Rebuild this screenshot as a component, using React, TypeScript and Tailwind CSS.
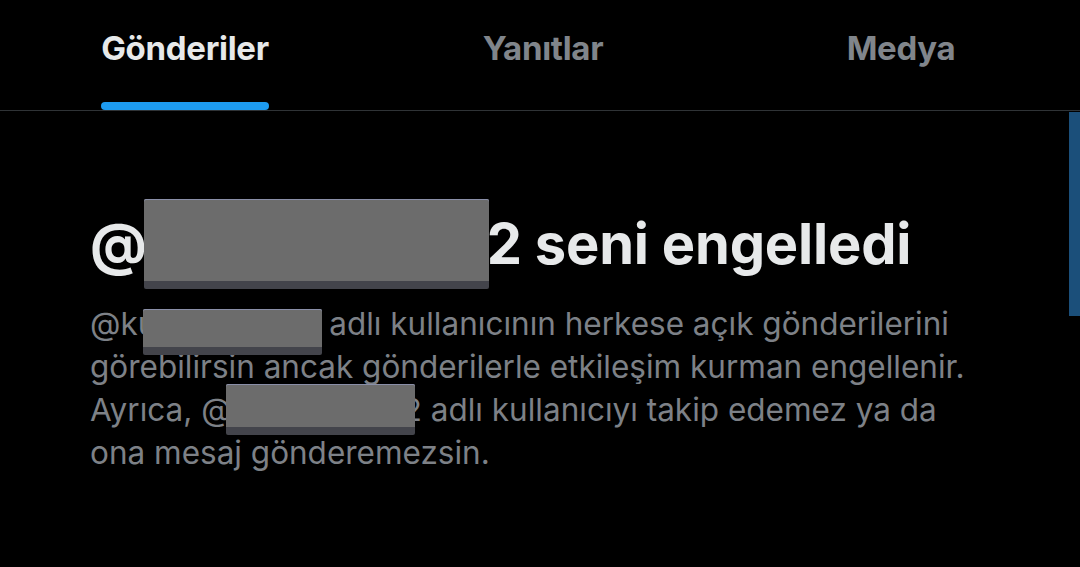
type RedactProps = { width: number; className: string };

// gray censor block sitting on the text baseline without growing the line
function Redact({ width, className }: RedactProps) {
  return (
    <span className="relative inline-block h-0 align-baseline" style={{ width }}>
      <span
        className={`absolute z-10 bg-[#6c6c6c] border-b-[8px] border-[#43444b] rounded-[2px] shadow-[0_1px_0_#8a8fa8_inset] ${className}`}
      ></span>
    </span>
  );
}

export default function App() {
  const tabs = [
    { label: "Gönderiler", active: true },
    { label: "Yanıtlar", active: false },
    { label: "Medya", active: false },
  ];

  return (
    <div className="w-[1080px] h-[567px] bg-black overflow-hidden relative font-['Inter','Noto_Sans',sans-serif]">
      {/* Tabs */}
      <div className="grid grid-cols-3 h-[111px] border-b border-[#2f3336] pl-[6px]">
        {tabs.map((t) => (
          <div key={t.label} className="flex flex-col items-center justify-end">
            <div className="flex flex-col items-stretch">
              <span
                className={`text-[33px] font-bold leading-none tracking-[-0.3px] ${
                  t.active ? "text-[#e7e9ea]" : "text-[#80858b]"
                }`}
              >
                {t.label}
              </span>
              <span
                className={`mt-[37px] h-[8px] rounded-full ${t.active ? "bg-[#1d9bf0]" : "bg-transparent"}`}
              ></span>
            </div>
          </div>
        ))}
      </div>

      {/* Scrollbar */}
      <div className="absolute right-0 top-[112px] w-[11px] h-[204px] bg-[#1b4f7a]"></div>

      {/* Blocked message */}
      <div className="pl-[90px] pt-[98px]">
        <h1 className="text-[56px] font-bold leading-[70px] text-[#e7e9ea] tracking-[-0.2px] whitespace-nowrap">
          @<Redact width={340} className="left-[-3px] w-[345px] -top-[65px] h-[90px]" />2 seni engelledi
        </h1>
        <p className="mt-[23px] text-[31.5px] leading-[43px] text-[#7d8187] whitespace-nowrap">
          @ku<Redact width={164} className="left-[-13px] w-[179px] -top-[26px] h-[46px]" /> adlı kullanıcının herkese açık gönderilerini
          <br />
          görebilirsin ancak gönderilerle etkileşim kurman engellenir.
          <br />
          Ayrıca, @<Redact width={171} className="left-[-6px] w-[189px] -top-[37px] h-[51px]" />2 adlı kullanıcıyı takip edemez ya da
          <br />
          ona mesaj gönderemezsin.
        </p>
      </div>
    </div>
  );
}
